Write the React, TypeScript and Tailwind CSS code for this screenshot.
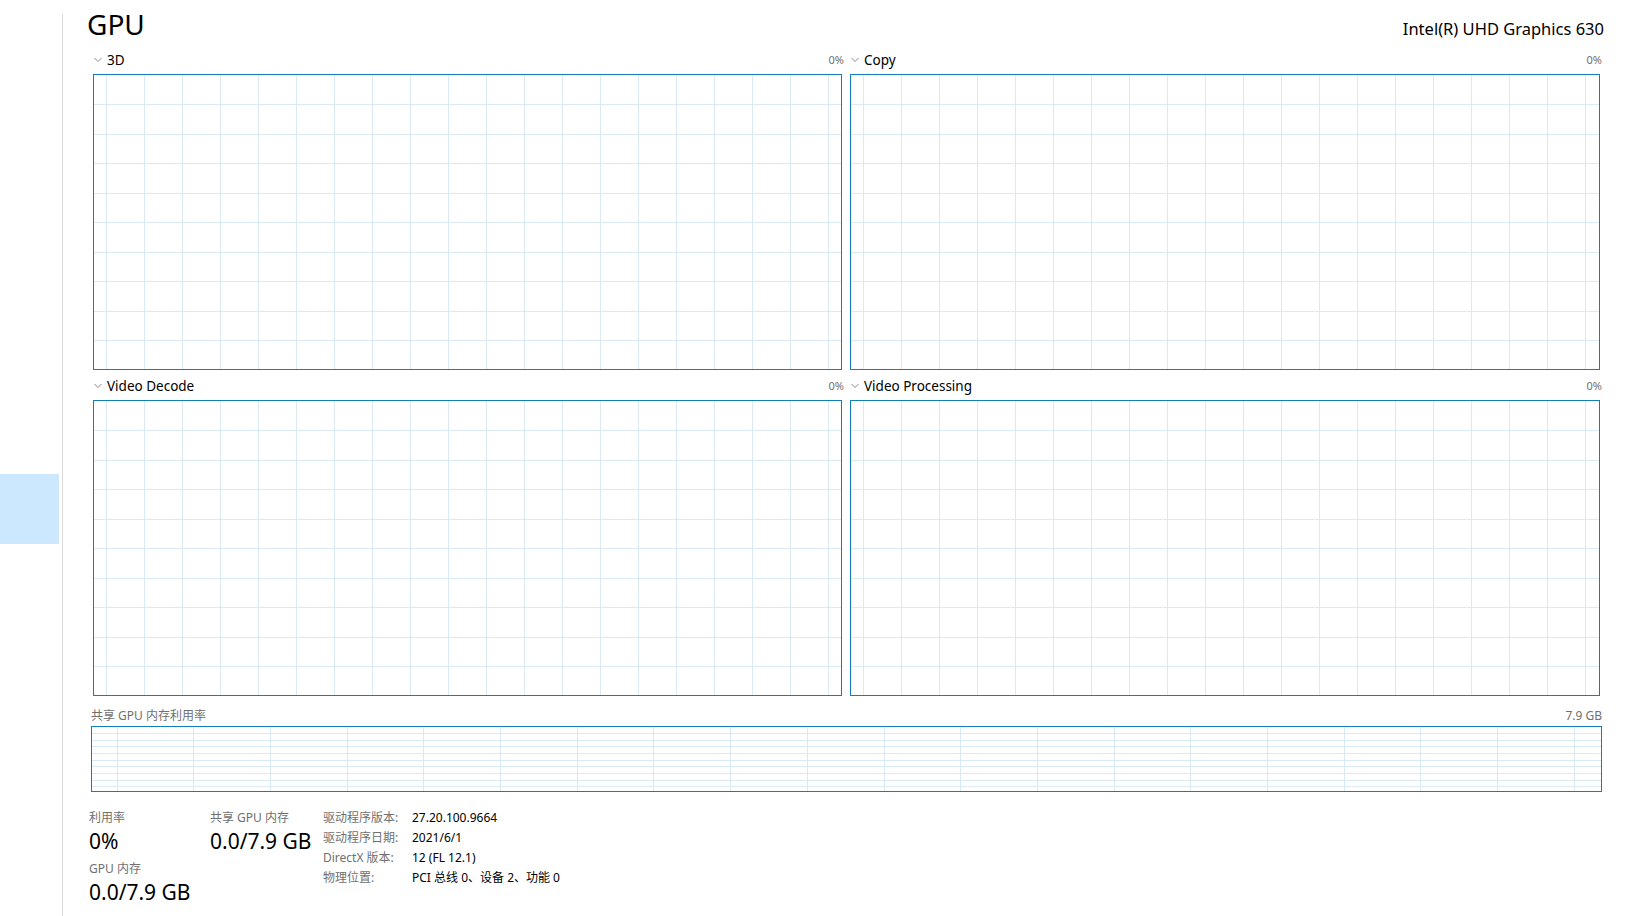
import React from 'react'

const GRID = '#d9eaf4'

// Gitterlinien im Graphen, Koordinaten relativ zur Innenfläche
function GridLines({ width, height, x0, stepX, y0, stepY }: { width: number; height: number; x0: number; stepX: number; y0: number; stepY: number }) {
  const xs: number[] = []
  for (let x = x0; x < width; x += stepX) xs.push(Math.floor(x) + 0.5)
  const ys: number[] = []
  for (let y = y0; y < height; y += stepY) ys.push(Math.floor(y) + 0.5)
  return (
    <svg className="absolute left-0 top-0 block" width={width} height={height} shapeRendering="crispEdges">
      {ys.map((y) => <line key={'y' + y} x1={0} x2={width} y1={y} y2={y} stroke={GRID} strokeWidth={1} />)}
      {xs.map((x) => <line key={'x' + x} x1={x} x2={x} y1={0} y2={height} stroke={GRID} strokeWidth={1} />)}
    </svg>
  )
}

function Chevron() {
  return (
    <svg width="8" height="6" viewBox="0 0 8 6" className="block">
      <polyline points="0.5,1 4,4.5 7.5,1" fill="none" stroke="#8a8a8a" strokeWidth="1" />
    </svg>
  )
}

function Panel({ title }: { title: string }) {
  return (
    <div>
      <div className="flex h-[22px] items-start justify-between">
        <div className="flex h-[16px] items-center gap-[5px] pl-[1px]">
          <Chevron />
          <span className="text-[13.5px] leading-[16px] text-black">{title}</span>
        </div>
        <span className="-mr-[2px] text-[11px] leading-[16px] text-[#707070]">0%</span>
      </div>
      <div className="relative h-[296px] overflow-hidden border border-[#117dbb]">
        <GridLines width={760} height={300} x0={12} stepX={38} y0={29.5} stepY={29.5} />
      </div>
    </div>
  )
}

const info: [string, string][] = [
  ['驱动程序版本:', '27.20.100.9664'],
  ['驱动程序日期:', '2021/6/1'],
  ['DirectX 版本:', '12 (FL 12.1)'],
  ['物理位置:', 'PCI 总线 0、设备 2、功能 0'],
]

export default function App() {
  return (
    <div className="flex h-[916px] w-[1628px] overflow-hidden bg-white font-['Noto_Sans','Noto_Sans_CJK_SC',sans-serif]">
      <aside className="w-[62px] shrink-0">
        <div className="mt-[474px] h-[70px] w-[59px] bg-[#cce8ff]" />
      </aside>
      <div className="mt-[14px] w-px shrink-0 bg-[#dadada]" />

      <main className="min-w-0 flex-1">
        <header className="flex h-[52px] items-baseline justify-between pl-[24px] pr-[24px] pt-[10px]">
          <h1 className="text-[28px] leading-[28px] font-normal text-black">GPU</h1>
          <span className="text-[16.5px] text-black">Intel(R) UHD Graphics 630</span>
        </header>

        <div className="grid grid-cols-[749px_750px] gap-x-[8px] gap-y-[8px] pl-[30px]">
          <Panel title="3D" />
          <Panel title="Copy" />
          <Panel title="Video Decode" />
          <Panel title="Video Processing" />
        </div>

        <section className="mt-[10px] pl-[28px] pr-[26px]">
          <div className="flex h-[20px] justify-between text-[12px] leading-[20px] text-[#707070]">
            <span>共享 GPU 内存利用率</span>
            <span>7.9 GB</span>
          </div>
          <div className="relative h-[66px] overflow-hidden border border-[#117dbb]">
            <GridLines width={1520} height={70} x0={25} stepX={76.7} y0={6.6} stepY={6.66} />
          </div>
        </section>

        <section className="mt-[16px] flex pl-[26px]">
          <div className="w-[121px]">
            <div className="h-[20px] text-[12px] leading-[20px] text-[#707070]">利用率</div>
            <div className="h-[26px] text-[21px] leading-[26px] text-black">0%</div>
            <div className="mt-[5px] h-[20px] text-[12px] leading-[20px] text-[#707070]">GPU 内存</div>
            <div className="h-[26px] text-[21px] leading-[26px] text-black">0.0/7.9 GB</div>
          </div>
          <div className="w-[113px]">
            <div className="h-[20px] text-[12px] leading-[20px] text-[#707070]">共享 GPU 内存</div>
            <div className="h-[26px] text-[21px] leading-[26px] text-black">0.0/7.9 GB</div>
          </div>
          <dl className="grid auto-rows-[20px] grid-cols-[89px_auto] text-[12px] leading-[20px]">
            {info.map(([k, v]) => (
              <React.Fragment key={k}>
                <dt className="h-[20px] text-[#707070]">{k}</dt>
                <dd className="h-[20px] text-black">{v}</dd>
              </React.Fragment>
            ))}
          </dl>
        </section>
      </main>
    </div>
  )
}
